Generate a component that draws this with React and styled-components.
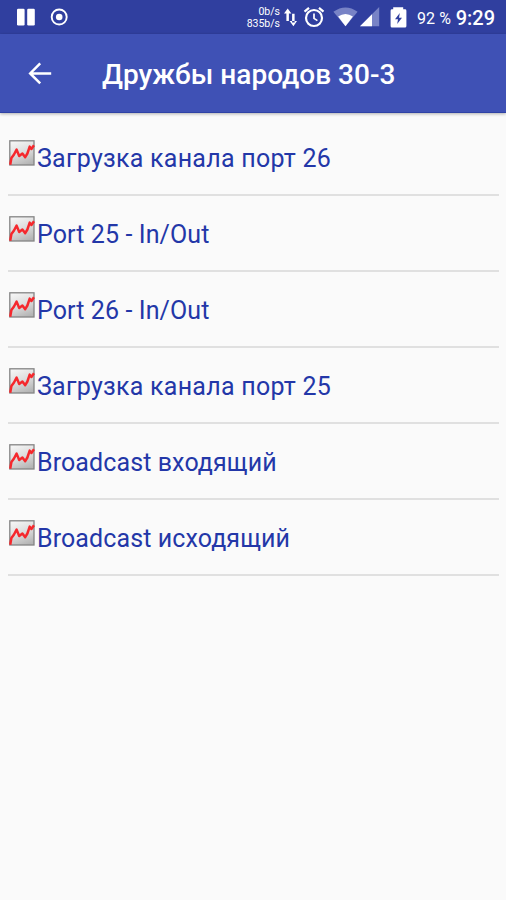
import React from 'react'
import styled, { createGlobalStyle } from 'styled-components'

const graphs = [
  { title: 'Загрузка канала порт 26', spacing: '0.26px' },
  { title: 'Port 25 - In/Out' },
  { title: 'Port 26 - In/Out' },
  { title: 'Загрузка канала порт 25', spacing: '0.26px' },
  { title: 'Broadcast входящий' },
  { title: 'Broadcast исходящий' },
]

const GraphIcon = () => (
  <svg width="26" height="26" viewBox="0 0 26 26">
    <defs>
      <linearGradient id="tile" x1="0.3" y1="0" x2="0.7" y2="1">
        <stop offset="0" stopColor="#f4f4f4" />
        <stop offset="0.5" stopColor="#dcdcdc" />
        <stop offset="1" stopColor="#b4b4b4" />
      </linearGradient>
    </defs>
    <rect x="0.8" y="0.8" width="24.2" height="24.2" fill="url(#tile)" stroke="#858585" strokeWidth="1.3" />
    <path
      d="M1.2 24.8 2.4 18 5 14.5 7.6 9.6 10.2 16 13.4 13.6 16.2 17.2 18.4 13.5 20.7 6.6 22.4 9 25 5.2"
      fill="none"
      stroke="#f5282d"
      strokeWidth="2.5"
      strokeLinejoin="round"
    />
  </svg>
)

const App = () => {
  return (
    <Screen>
      <GlobalStyle />
      <StatusBar>
        <svg width="18" height="18" viewBox="0 0 18 18">
          <rect x="0" y="0.7" width="7.6" height="16.8" rx="1.2" fill="#fff" />
          <rect x="10.2" y="0.7" width="7.6" height="16.8" rx="1.2" fill="#fff" />
        </svg>
        <RecordIcon width="18" height="18" viewBox="0 0 18 18">
          <circle cx="9.2" cy="9" r="7.5" fill="none" stroke="#fff" strokeWidth="1.9" />
          <circle cx="9.2" cy="9" r="3.3" fill="#fff" />
        </RecordIcon>
        <Speed>
          <span>0b/s</span>
          <span>835b/s</span>
        </Speed>
        <svg width="13" height="20" viewBox="0 0 13 20">
          <path d="M2.4 5H4.9V14H2.4ZM0 6.6 3.7 1.4 7.4 6.6ZM8.1 6.8H10.6V15.6H8.1ZM5.6 14 9.4 19.2 13 14Z" fill="#fff" />
        </svg>
        {/* alarm */}
        <AlarmIcon width="22" height="22" viewBox="0 0 22 22" fill="none" stroke="#fff">
          <circle cx="11" cy="12" r="8" strokeWidth="2.2" />
          <path d="M11 7.4V12.4L14.4 14.6" strokeWidth="1.7" />
          <path d="M1.5 5.7 6 1.9M20.5 5.7 16 1.9" strokeWidth="2.2" />
        </AlarmIcon>
        {/* wifi and mobile signal */}
        <WifiIcon width="25" height="20" viewBox="0 0 25 20" fill="#fff">
          <path d="M.4 4.8Q12.5-4 24.6 4.8L12.5 19.2Z" fill="#7883c6" />
          <path d="M5.1 9.6Q12.5 4.2 19.9 9.6L12.5 19.2Z" />
        </WifiIcon>
        <SignalIcon width="20" height="20" viewBox="0 0 20 20">
          <path d="M0 19.2 19.2 0V19.2Z" fill="#7883c6" />
          <path d="M0 19.2 12 7.2V19.2Z" fill="#fff" />
        </SignalIcon>
        <BatteryIcon width="17" height="21" viewBox="0 0 17 21">
          <path d="M3.2 .3H13.2V2.3H15Q16.4 2.3 16.4 3.7V19Q16.4 20.5 15 20.5H2Q.6 20.5.6 19V3.7Q.6 2.3 2 2.3H3.2Z" fill="#fff" />
          <path d="M9.8 5.9 5 12.3H8L7.2 17.1 12 10.7H9Z" fill="#303f9f" />
        </BatteryIcon>
        <Percent>92 %</Percent>
        <Clock>9:29</Clock>
      </StatusBar>
      <Toolbar>
        <svg width="24" height="24" viewBox="0 0 24 24">
          <path d="M23.2 12.4H2.4M12.2 2.4 2.2 12.4 12.2 22.4" fill="none" stroke="#fff" strokeWidth="2.5" />
        </svg>
        <Title>Дружбы народов 30-3</Title>
      </Toolbar>
      <List>
        {graphs.map(graph => (
          <Row key={graph.title}>
            <GraphIcon />
            <Label $spacing={graph.spacing}>{graph.title}</Label>
          </Row>
        ))}
      </List>
    </Screen>
  )
}

const GlobalStyle = createGlobalStyle`
  body {
    margin: 0;
    background: #fafafa;
  }
`

const Screen = styled.div`
  min-height: 900px;
  background: #fafafa;
  font-family: Roboto, 'Liberation Sans', sans-serif;

  svg {
    display: block;
    flex: none;
  }
`

const StatusBar = styled.div`
  display: flex;
  align-items: center;
  box-sizing: border-box;
  height: 34px;
  padding: 0 11px 0 17px;
  background: #303f9f;
  color: #fff;
  white-space: nowrap;
`

const RecordIcon = styled.svg`
  margin-left: 15px;
`

const Speed = styled.div`
  display: flex;
  flex-direction: column;
  align-items: flex-end;
  width: 40px;
  margin: 2px 4px 0 172px;
  font-size: 10.5px;
  line-height: 12px;
`

const AlarmIcon = styled.svg`
  margin-left: 6px;
`

const WifiIcon = styled.svg`
  margin-left: 8px;
`

const SignalIcon = styled.svg`
  margin-left: 2px;
`

const BatteryIcon = styled.svg`
  margin-left: 10px;
`

const Percent = styled.span`
  margin: 3px 0 0 10px;
  font-size: 16px;
  letter-spacing: 0.1px;
`

const Clock = styled.span`
  margin: 2px 0 0 auto;
  font-size: 20px;
  font-weight: 500;
`

const Toolbar = styled.div`
  display: flex;
  align-items: center;
  box-sizing: border-box;
  height: 79px;
  padding-left: 28px;
  background: #3f51b5;
  border-bottom: 1px solid #2f42a5;
  box-shadow: 0 1px 3px rgba(0, 0, 0, 0.3);
`

const Title = styled.h1`
  margin: 3px 0 0 50px;
  color: #fff;
  font-size: 28px;
  font-weight: 500;
  line-height: 36px;
`

const List = styled.div`
  padding: 7px 7px 0 8px;
`

const Row = styled.div`
  display: flex;
  align-items: flex-start;
  box-sizing: border-box;
  height: 76px;
  padding: 20px 0 0 1px;
  border-bottom: 2px solid #e0e0e0;
`

const Label = styled.span`
  margin: 4px 0 0 2px;
  color: #2337a8;
  font-size: 25px;
  line-height: 30px;
  letter-spacing: ${({ $spacing }) => $spacing || '0.1px'};
  white-space: nowrap;
`

export default App
